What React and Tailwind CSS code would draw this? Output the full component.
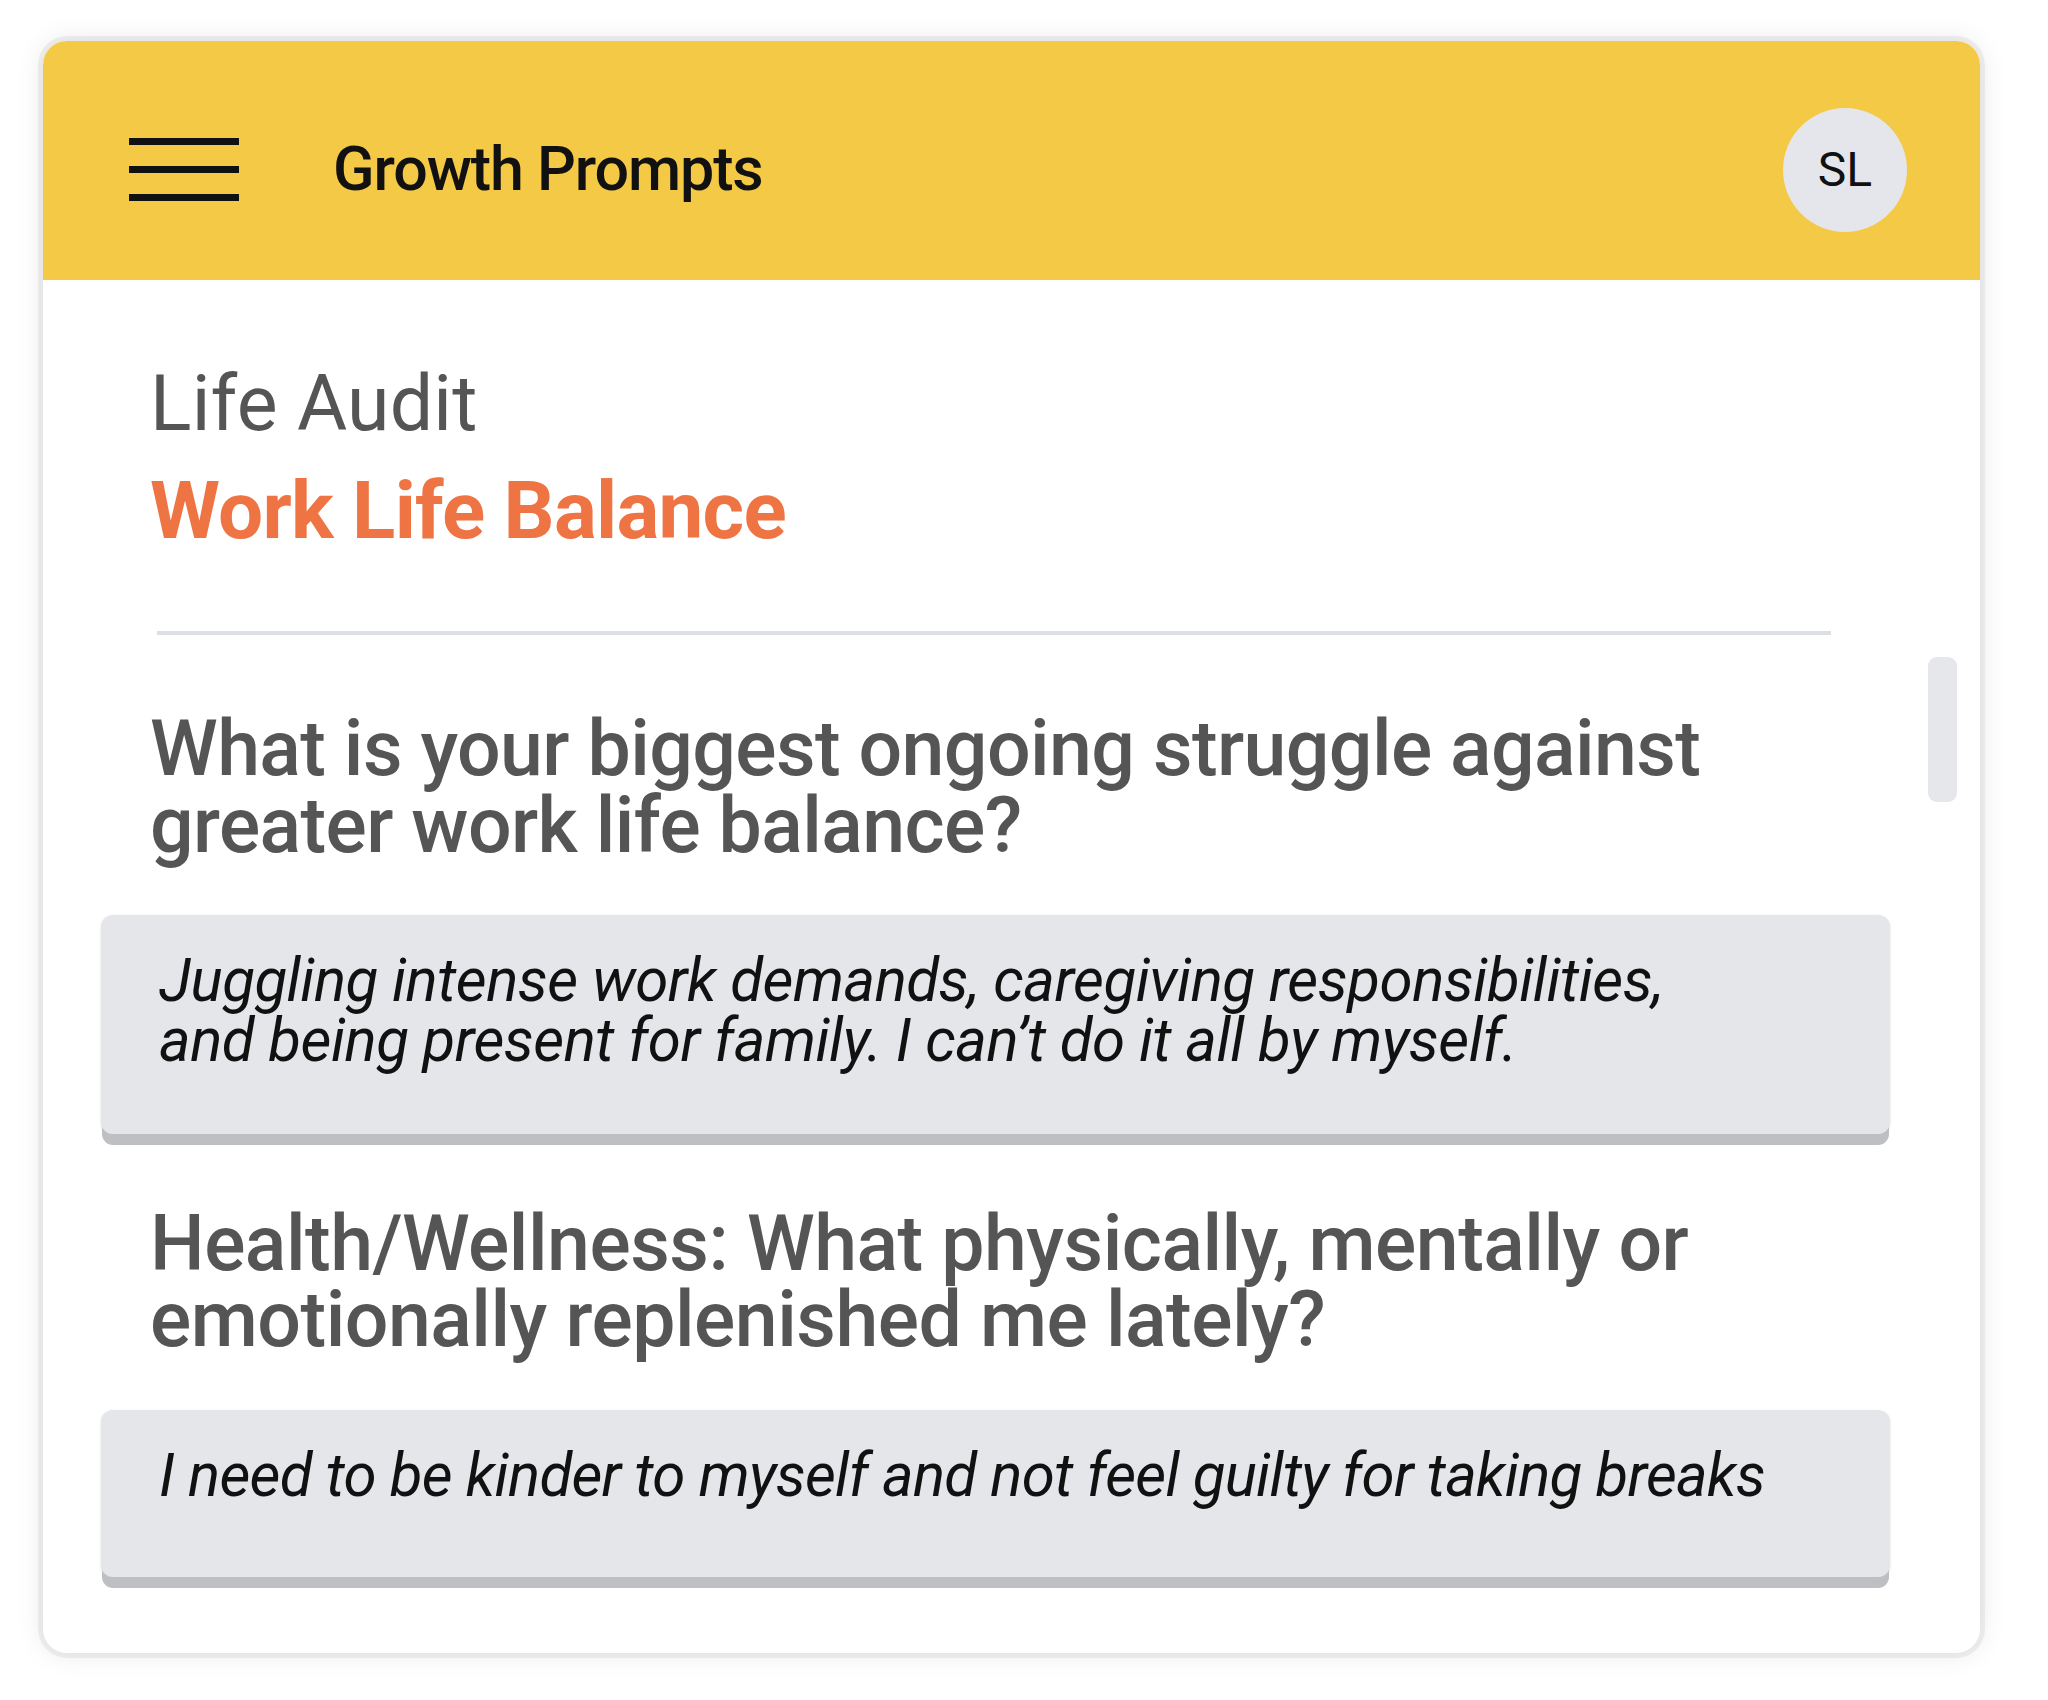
export default function App() {
  const font = { fontFamily: 'Roboto, "Noto Sans", sans-serif' };
  return (
    <div className="min-h-[1700px] w-[2048px] bg-white" style={font}>
      <div className="pt-[41px] pl-[43px]">
        <div className="relative w-[1937px] h-[1612px] rounded-[24px] bg-white overflow-hidden shadow-[0_0_0_5px_rgba(0,0,0,0.05),0_0_28px_rgba(0,0,0,0.10)]">
          {/* Header */}
          <div className="h-[239px] bg-[#F4C945] flex items-center pt-[18px] pl-[86px] pr-[73px]">
            <div className="flex flex-col gap-[21px] w-[110px]">
              <div className="h-[7px] bg-[#111111]" />
              <div className="h-[7px] bg-[#111111]" />
              <div className="h-[7px] bg-[#111111]" />
            </div>
            <div className="ml-[94px] text-[61px] leading-none font-medium text-[#111111] tracking-[-1.1px]">
              Growth Prompts
            </div>
            <div className="ml-auto w-[124px] h-[124px] rounded-full bg-[#E4E6EB] flex items-center justify-center text-[48px] text-[#111111]">
              SL
            </div>
          </div>

          {/* Body */}
          <div className="pt-[86px] pl-[107px]">
            <div className="text-[77px] leading-[77px] text-[#555555] tracking-[0.2px]">Life Audit</div>
            <div className="mt-[28px] text-[80px] leading-[80px] font-bold text-[#EF7444] tracking-[-0.75px]">
              Work Life Balance
            </div>
            <div className="mt-[80px] ml-[7px] w-[1674px] h-[4px] bg-[#DCDFE3]" />
            <div className="mt-[76px] text-[77px] leading-[77px] font-medium text-[#555555] tracking-[-0.6px]">
              What is your biggest ongoing struggle against
              <br />
              greater work life balance?
            </div>
          </div>

          <div className="pl-[58px]">
            <div className="mt-[50px] w-[1789px] h-[219px] rounded-[12px] bg-[#E4E6EA] pt-[36px] pl-[58px] shadow-[0_12px_0_-1px_#BDBFC3,0_1px_3px_rgba(0,0,0,0.12)]">
              <div className="text-[60px] leading-[60px] italic text-[#111111] tracking-[-0.5px]">
                Juggling intense work demands, caregiving responsibilities,
                <br />
                and being present for family. I can’t do it all by myself.
              </div>
            </div>
          </div>

          <div className="pl-[107px]">
            <div className="mt-[72px] text-[77px] leading-[76px] font-medium text-[#555555] tracking-[-0.5px]">
              Health/Wellness: What physically, mentally or
              <br />
              emotionally replenished me lately?
            </div>
          </div>

          <div className="pl-[58px]">
            <div className="mt-[52px] w-[1789px] h-[167px] rounded-[12px] bg-[#E4E6EA] pt-[36px] pl-[58px] shadow-[0_12px_0_-1px_#BDBFC3,0_1px_3px_rgba(0,0,0,0.12)]">
              <div className="text-[60px] leading-[60px] italic text-[#111111] tracking-[-0.75px]">
                I need to be kinder to myself and not feel guilty for taking breaks
              </div>
            </div>
          </div>

          {/* scrollbar thumb */}
          <div className="absolute left-[1885px] top-[616px] w-[29px] h-[145px] rounded-[9px] bg-[#E5E7EB]" />
        </div>
      </div>
    </div>
  );
}
